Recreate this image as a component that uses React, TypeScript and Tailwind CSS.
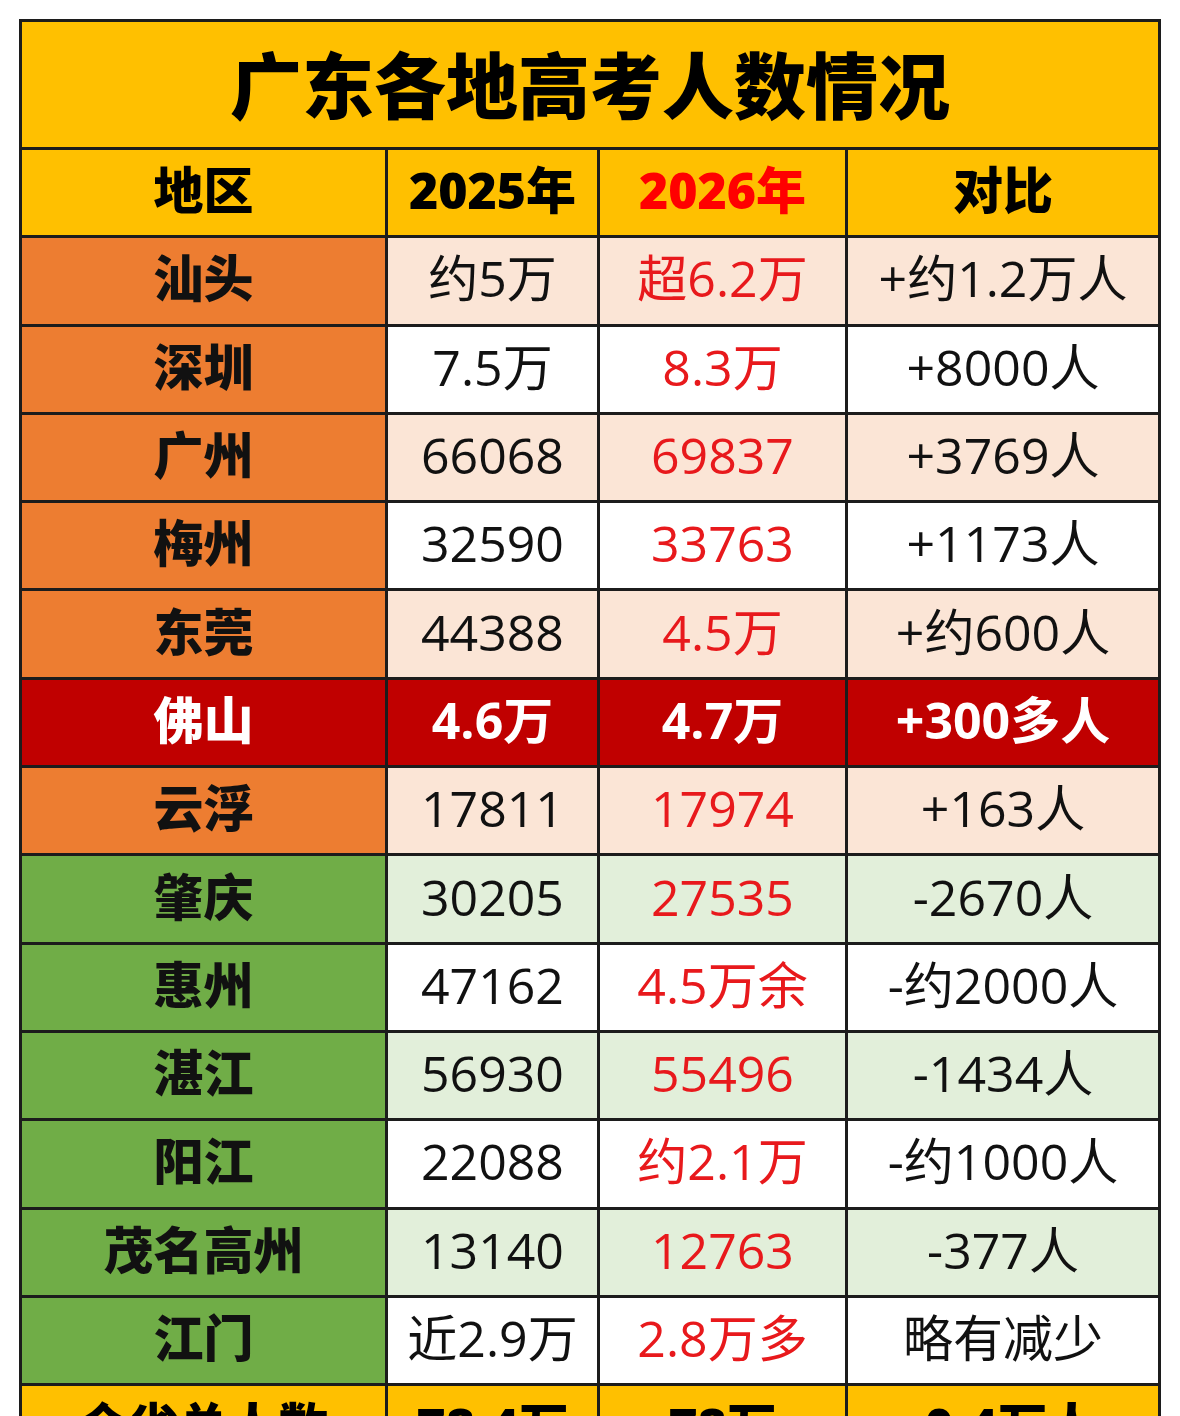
import React from 'react';

type Tone = 'peach' | 'white' | 'green' | 'hot';

interface Row {
    name: string;
    y2025: string;
    y2026: string;
    diff: string;
    tone: Tone;
    region: 'up' | 'down';
}

const rows: Row[] = [
    { name: '汕头', y2025: '约5万', y2026: '超6.2万', diff: '+约1.2万人', tone: 'peach', region: 'up' },
    { name: '深圳', y2025: '7.5万', y2026: '8.3万', diff: '+8000人', tone: 'white', region: 'up' },
    { name: '广州', y2025: '66068', y2026: '69837', diff: '+3769人', tone: 'peach', region: 'up' },
    { name: '梅州', y2025: '32590', y2026: '33763', diff: '+1173人', tone: 'white', region: 'up' },
    { name: '东莞', y2025: '44388', y2026: '4.5万', diff: '+约600人', tone: 'peach', region: 'up' },
    { name: '佛山', y2025: '4.6万', y2026: '4.7万', diff: '+300多人', tone: 'hot', region: 'up' },
    { name: '云浮', y2025: '17811', y2026: '17974', diff: '+163人', tone: 'peach', region: 'up' },
    { name: '肇庆', y2025: '30205', y2026: '27535', diff: '-2670人', tone: 'green', region: 'down' },
    { name: '惠州', y2025: '47162', y2026: '4.5万余', diff: '-约2000人', tone: 'white', region: 'down' },
    { name: '湛江', y2025: '56930', y2026: '55496', diff: '-1434人', tone: 'green', region: 'down' },
    { name: '阳江', y2025: '22088', y2026: '约2.1万', diff: '-约1000人', tone: 'white', region: 'down' },
    { name: '茂名高州', y2025: '13140', y2026: '12763', diff: '-377人', tone: 'green', region: 'down' },
    { name: '江门', y2025: '近2.9万', y2026: '2.8万多', diff: '略有减少', tone: 'white', region: 'down' },
];

const toneBg: Record<Tone, string> = {
    peach: 'bg-[#fbe5d6]',
    white: 'bg-white',
    green: 'bg-[#e2efda]',
    hot: 'bg-[#c00000]',
};

// numbers read wider in the source, so latin glyphs come from Open Sans
const cell = 'border-[3px] border-[#1c1c1c] h-[88.3px] p-0 pb-[5px] text-center align-middle text-[50px] leading-none';

export default function App() {
    return (
        <div className="min-h-screen bg-white pt-[19px] pl-[19px] font-['Open_Sans','Noto_Sans_CJK_SC',sans-serif]">
            <table className="w-[1139px] table-fixed border-collapse">
                <colgroup>
                    <col className="w-[366px]" />
                    <col className="w-[212px]" />
                    <col className="w-[248px]" />
                    <col className="w-[313px]" />
                </colgroup>
                <tbody>
                    <tr>
                        <td
                            colSpan={4}
                            className="h-[128px] border-[3px] border-[#1c1c1c] bg-[#ffc000] pb-[6px] text-center align-middle font-['Noto_Sans_CJK_SC',sans-serif] text-[72px] font-black leading-none text-black"
                        >
                            广东各地高考人数情况
                        </td>
                    </tr>
                    <tr className="bg-[#ffc000] font-black text-black">
                        <td className={cell}>地区</td>
                        <td className={cell}>2025年</td>
                        <td className={`${cell} text-[#ff0000]`}>2026年</td>
                        <td className={cell}>对比</td>
                    </tr>
                    {rows.map((r) => {
                        const hot = r.tone === 'hot';
                        return (
                            <tr key={r.name} className={toneBg[r.tone]}>
                                <td
                                    className={`${cell} font-black ${
                                        hot
                                            ? 'bg-[#c00000] text-white'
                                            : r.region === 'up'
                                              ? 'bg-[#ed7d31] text-[#111]'
                                              : 'bg-[#70ad47] text-[#111]'
                                    }`}
                                >
                                    {r.name}
                                </td>
                                <td className={`${cell} ${hot ? 'font-bold text-white' : 'text-[#111]'}`}>
                                    {r.y2025}
                                </td>
                                <td className={`${cell} ${hot ? 'font-bold text-white' : 'text-[#e8191c]'}`}>
                                    {r.y2026}
                                </td>
                                <td className={`${cell} ${hot ? 'font-bold text-white' : 'text-[#111]'}`}>
                                    {r.diff}
                                </td>
                            </tr>
                        );
                    })}
                    <tr className="bg-[#ffc000] font-black text-black">
                        <td className={cell}>全省总人数</td>
                        <td className={cell}>78.4万</td>
                        <td className={cell}>78万</td>
                        <td className={cell}>-0.4万人</td>
                    </tr>
                </tbody>
            </table>
        </div>
    );
}
